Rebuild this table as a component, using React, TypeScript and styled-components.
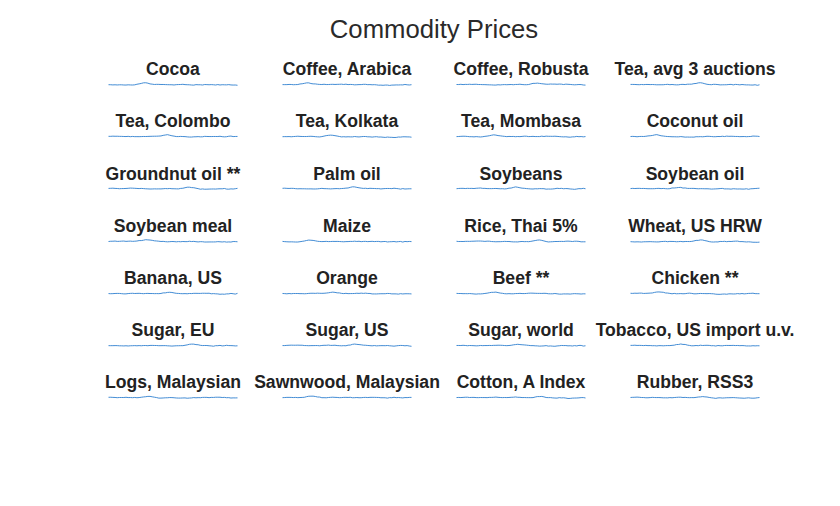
import React from "react";
import styled, { createGlobalStyle } from "styled-components";

const Global = createGlobalStyle`
  html, body { margin: 0; padding: 0; background: #fff; }
  body { font-family: "Liberation Sans", Arial, sans-serif; }
`;

const Page = styled.div`
  width: 840px;
  height: 506px;
  box-sizing: border-box;
  padding: 17px 0 0 86px;
`;

const Panel = styled.div`
  width: 696px;
  display: flex;
  flex-direction: column;
`;

const Title = styled.h1`
  margin: 0;
  font-size: 25.7px;
  line-height: 25.5px;
  height: 25.5px;
  font-weight: 400;
  color: #2a2a2a;
  text-align: center;
`;

const Grid = styled.div`
  margin-top: 18.7px;
  display: grid;
  grid-template-columns: repeat(4, 174px);
  grid-auto-rows: 52.17px;
`;

const Cell = styled.div`
  display: flex;
  flex-direction: column;
  align-items: center;
`;

const Label = styled.div`
  font-size: 17.6px;
  line-height: 17.4px;
  height: 17.4px;
  font-weight: 700;
  color: #222;
  white-space: nowrap;
`;

const Spark = styled.svg`
  display: block;
  margin-top: 0.6px;
  width: 130px;
  height: 10px;
`;

const items = [
  "Cocoa", "Coffee, Arabica", "Coffee, Robusta", "Tea, avg 3 auctions",
  "Tea, Colombo", "Tea, Kolkata", "Tea, Mombasa", "Coconut oil",
  "Groundnut oil **", "Palm oil", "Soybeans", "Soybean oil",
  "Soybean meal", "Maize", "Rice, Thai 5%", "Wheat, US HRW",
  "Banana, US", "Orange", "Beef **", "Chicken **",
  "Sugar, EU", "Sugar, US", "Sugar, world", "Tobacco, US import u.v.",
  "Logs, Malaysian", "Sawnwood, Malaysian", "Cotton, A Index", "Rubber, RSS3",
];

function makePath(seed: number): string {
  let s = seed * 9301 + 49297;
  const rnd = () => {
    s = (s * 9301 + 49297) % 233280;
    return s / 233280;
  };
  const n = 60;
  const pts: string[] = [];
  let y = 0;
  const bumpAt = 10 + rnd() * 30;
  for (let i = 0; i < n; i++) {
    y += (rnd() - 0.5) * 0.6;
    y *= 0.8;
    const bump = Math.max(0, 1.6 - Math.abs(i - bumpAt) * 0.35);
    const yy = 5.5 + y - bump + (i / n) * (rnd() * 0.5);
    const x = 0.5 + (i * 129) / (n - 1);
    pts.push(`${i === 0 ? "M" : "L"}${x.toFixed(2)},${yy.toFixed(2)}`);
  }
  return pts.join(" ");
}

const Sparkline: React.FC<{ seed: number }> = ({ seed }) => (
  <Spark viewBox="0 0 130 10">
    <path d={makePath(seed)} fill="none" stroke="#2f7fcf" strokeWidth={1} strokeOpacity={0.9} />
  </Spark>
);

export default function App() {
  return (
    <>
      <Global />
      <Page>
        <Panel>
          <Title>Commodity Prices</Title>
          <Grid>
            {items.map((name, i) => (
              <Cell key={name}>
                <Label>{name}</Label>
                <Sparkline seed={i + 3} />
              </Cell>
            ))}
          </Grid>
        </Panel>
      </Page>
    </>
  );
}
